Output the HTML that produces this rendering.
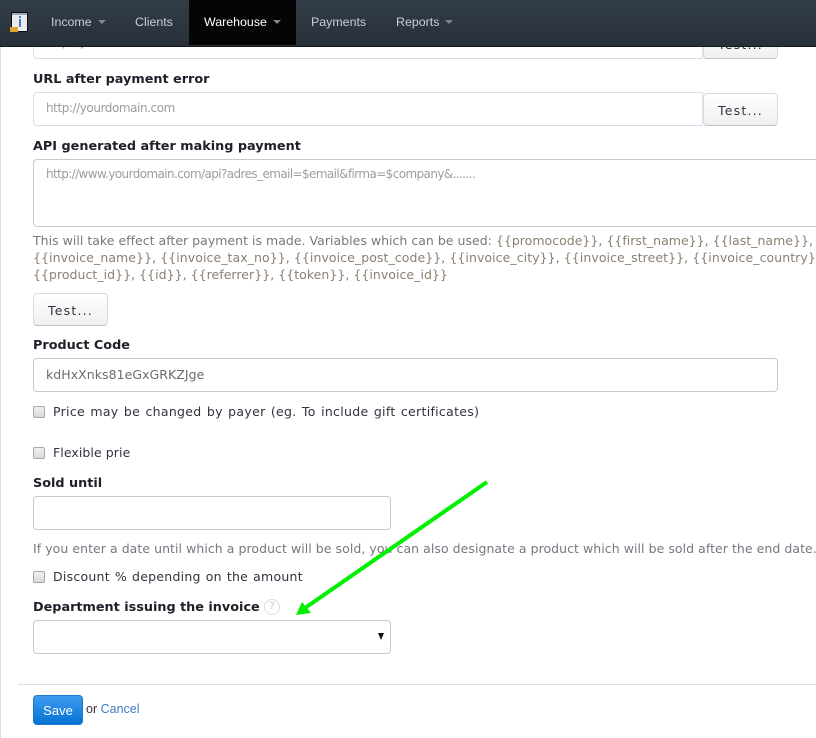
<!DOCTYPE html>
<html lang="en">
<head>
<meta charset="utf-8">
<title>Warehouse</title>
<style>
html,body{margin:0;padding:0;background:#fff}
body{width:816px;height:738px;position:relative;overflow:hidden;font-family:"DejaVu Sans",Verdana,sans-serif;font-size:12.5px;color:#33333f}
.a{position:absolute;white-space:nowrap}
#edge{left:0;top:0;width:1px;height:738px;background:#d3dfeb}
#nav{left:0;top:0;width:816px;height:47px;background:linear-gradient(#323d48,#28303a);border-bottom:1px solid #14181d;box-sizing:border-box}
.n{position:absolute;top:0;height:45px;line-height:44px;font-family:"Liberation Sans",Arial,sans-serif;font-size:12.4px;color:#c9cfd6}
.c{display:inline-block;width:0;height:0;border-left:4px solid transparent;border-right:4px solid transparent;border-top:4px solid #7f8890;margin-left:6px;vertical-align:2px}
#act{left:189px;top:0;width:107px;height:45px;background:#050505}
.box{position:absolute;box-sizing:border-box;background:#fff;border:1px solid #c9c9c9;border-radius:4px}
.blue{border-color:#d3e0ec}
.btn{position:absolute;box-sizing:border-box;border:1px solid #dcdcdc;border-bottom-color:#c4c4c4;border-radius:4px;background:linear-gradient(#fff,#eff0f1);text-align:center;font-size:12.5px;color:#33333f;letter-spacing:1.2px}
.lb{font-weight:bold;color:#20202a;font-size:12.8px}
.ph{color:#9d9d9d;font-size:12px}
.h{color:#777780;font-size:12.5px;line-height:17px}
.v{color:#8c8072}
.cb{position:absolute;box-sizing:border-box;width:12px;height:12px;border:1px solid #a9a9a9;border-radius:2px;background:linear-gradient(#f1f1f1,#d9d9d9)}
</style>
</head>
<body>
<div class="a" id="edge"></div>

<!-- top partial field -->
<div class="box blue" style="left:33px;top:30px;width:670px;height:29px;border-radius:0 0 0 4px"></div>
<div class="a ph" style="left:46px;top:35px;letter-spacing:-.43px">http://yourdomain.com</div>
<div class="btn" style="left:703px;top:26px;width:75px;height:33px;line-height:35px">Test...</div>

<div class="a lb" style="left:33px;top:72px">URL after payment error</div>
<div class="box blue" style="left:33px;top:92px;width:670px;height:34px;border-radius:4px 0 0 4px"></div>
<div class="a ph" style="left:46px;top:101px;letter-spacing:-.43px">http://yourdomain.com</div>
<div class="btn" style="left:703px;top:93px;width:75px;height:33px;line-height:33px">Test...</div>

<div class="a lb" style="left:33px;top:139px">API generated after making payment</div>
<div class="box" style="left:33px;top:159px;width:800px;height:68px"></div>
<div class="a ph" style="left:46px;top:167px;letter-spacing:-.6px">http://www.yourdomain.com/api?adres_email=$email&amp;firma=$company&amp;.......</div>

<div class="a h" style="left:33px;top:232px;letter-spacing:.02px">This will take effect after payment is made. Variables which can be used: <span class="v">{{promocode}}</span>, <span class="v">{{first_name}}</span>, <span class="v">{{last_name}}</span>,</div>
<div class="a h" style="left:33px;top:249px;letter-spacing:.07px"><span class="v">{{invoice_name}}</span>, <span class="v">{{invoice_tax_no}}</span>, <span class="v">{{invoice_post_code}}</span>, <span class="v">{{invoice_city}}</span>, <span class="v">{{invoice_street}}</span>, <span class="v">{{invoice_country}}</span>,</div>
<div class="a h" style="left:33px;top:266px;letter-spacing:.04px"><span class="v">{{product_id}}</span>, <span class="v">{{id}}</span>, <span class="v">{{referrer}}</span>, <span class="v">{{token}}</span>, <span class="v">{{invoice_id}}</span></div>

<div class="btn" style="left:33px;top:293px;width:75px;height:33px;line-height:33px">Test...</div>

<div class="a lb" style="left:33px;top:338px">Product Code</div>
<div class="box" style="left:33px;top:358px;width:745px;height:34px"></div>
<div class="a" style="left:46px;top:367px;color:#6a6a72;letter-spacing:.05px">kdHxXnks81eGxGRKZJge</div>

<div class="cb" style="left:33px;top:406px"></div>
<div class="a" style="left:53px;top:404px;letter-spacing:.3px;word-spacing:1.1px">Price may be changed by payer (eg. To include gift certificates)</div>
<div class="cb" style="left:33px;top:447px"></div>
<div class="a" style="left:53px;top:445px;letter-spacing:.08px">Flexible prie</div>

<div class="a lb" style="left:33px;top:476px">Sold until</div>
<div class="box" style="left:33px;top:496px;width:358px;height:34px"></div>
<div class="a h" style="left:33px;top:540px;letter-spacing:.05px">If you enter a date until which a product will be sold, you can also designate a product which will be sold after the end date.</div>

<div class="cb" style="left:33px;top:571px"></div>
<div class="a" style="left:53px;top:569px;letter-spacing:.25px;word-spacing:.8px">Discount % depending on the amount</div>

<div class="a lb" style="left:33px;top:600px">Department issuing the invoice</div>
<div class="a" style="left:264px;top:599px;width:14px;height:14px;border:1px solid #dcdcdc;border-radius:50%;text-align:center;font-size:10px;line-height:14px;color:#c4c4c4">?</div>
<div class="box" style="left:33px;top:620px;width:358px;height:34px"></div>
<div class="a" style="left:378px;top:633px;width:0;height:0;border-left:3px solid transparent;border-right:3px solid transparent;border-top:7px solid #111"></div>

<div class="a" style="left:18px;top:684px;width:798px;height:1px;background:#dedede"></div>
<div class="a" style="left:33px;top:695px;width:50px;height:30px;box-sizing:border-box;border:1px solid #1c7cc9;border-radius:4px;background:linear-gradient(#3f9cf0,#0472d2);color:#fff;text-align:center;line-height:29px;font-family:'Liberation Sans',Arial,sans-serif;font-size:13px">Save</div>
<div class="a" style="left:86px;top:702px;font-family:'Liberation Sans',Arial,sans-serif;font-size:12.5px;color:#33333f">or <span style="color:#3f7cc4">Cancel</span></div>

<svg class="a" style="left:0;top:0" width="816" height="738" viewBox="0 0 816 738">
<line x1="487" y1="482" x2="305" y2="608" stroke="#00f000" stroke-width="4"/>
<polygon points="296,615 302,602 311,613" fill="#00f000"/>
</svg>

<!-- nav on top -->
<div class="a" id="nav"></div>
<div class="a" id="act"></div>
<svg class="a" style="left:9px;top:11px" width="21" height="23" viewBox="0 0 21 23">
<rect x="2" y="1" width="17" height="20" fill="#0c0c0c"/>
<rect x="3" y="2" width="15" height="18" fill="#e9e9ee"/>
<rect x="3" y="2" width="15" height="2" fill="#9fa6c0"/>
<rect x="10" y="5" width="2" height="2" fill="#4a7fb5"/>
<rect x="10" y="8" width="2" height="8" fill="#4a7fb5"/>
<rect x="1" y="16" width="8" height="5" fill="#e0a62c"/>
</svg>
<div class="n" style="left:51px">Income<span class="c"></span></div>
<div class="n" style="left:135px">Clients</div>
<div class="n" style="left:204px;color:#fff">Warehouse<span class="c"></span></div>
<div class="n" style="left:311px">Payments</div>
<div class="n" style="left:396px">Reports<span class="c"></span></div>
</body>
</html>
